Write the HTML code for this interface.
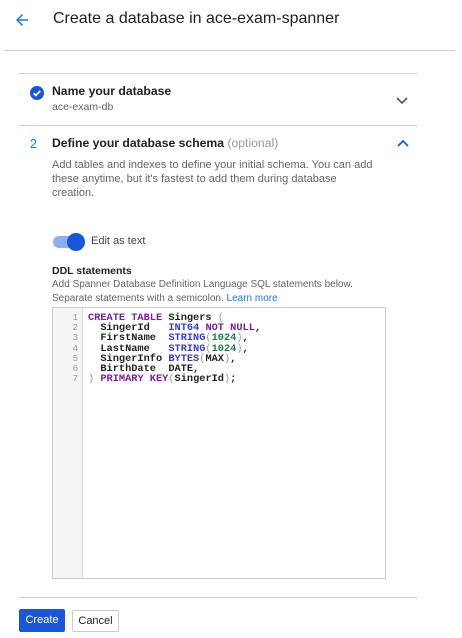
<!DOCTYPE html>
<html><head><meta charset="utf-8"><style>
*{margin:0;padding:0;box-sizing:border-box}
body{width:462px;height:638px;background:#fff;font-family:"Liberation Sans",Arial,sans-serif;color:#202124;position:relative;overflow:hidden}
.a{position:absolute;white-space:nowrap}
.hr{position:absolute;height:1px;background:#d0d0d0}
.code{position:absolute;left:52px;top:307px;width:334px;height:272px;border:1px solid #ccc;background:#fff}
.gut{position:absolute;left:0;top:0;width:30px;height:100%;background:#f5f5f5;border-right:1px solid #ddd;font:9px/10.2px "Liberation Mono",monospace;color:#999;text-align:right;padding:5px 4px 0 0}
.src{position:absolute;left:35px;top:5px;font:10.3px/10.2px "Liberation Mono",monospace;color:#222;white-space:pre;font-weight:bold}
.k{color:#7a1f9c}.t{color:#3a3acb}.n{color:#1c7a4a}.p{color:#999;font-weight:normal}
</style></head><body>
<svg class="a" style="left:13px;top:11px" width="18" height="18" viewBox="0 0 24 24"><path d="M20 11H7.8l5.6-5.6L12 4l-8 8 8 8 1.4-1.4L7.8 13H20z" fill="#1a73e8"/></svg>
<div class="a" style="left:53px;top:10px;font-size:16px;color:#202124">Create a database in ace-exam-spanner</div>
<div class="hr" style="left:4px;width:451px;top:50px"></div>
<div class="hr" style="left:19px;width:398px;top:73px"></div>
<svg class="a" style="left:29px;top:85px" width="16" height="16" viewBox="0 0 16 16"><circle cx="8" cy="8" r="7" fill="#1a56d6"/><path d="M4.6 8.2l2.2 2.2 4.4-4.4" stroke="#fff" stroke-width="1.8" fill="none"/></svg>
<div class="a" style="left:52px;top:84px;font-size:12.2px;font-weight:bold;color:#222">Name your database</div>
<div class="a" style="left:52px;top:101px;font-size:10.5px;color:#5f6368">ace-exam-db</div>
<svg class="a" style="left:396px;top:96px" width="12" height="9" viewBox="0 0 12 9"><path d="M1 2l5 5 5-5" stroke="#555" stroke-width="1.6" fill="none"/></svg>
<div class="hr" style="left:19px;width:398px;top:125px"></div>
<div class="a" style="left:30px;top:137px;font-size:12.5px;color:#1a73e8">2</div>
<div class="a" style="left:52px;top:136px;font-size:12.2px;font-weight:bold;color:#222">Define your database schema <span style="font-weight:normal;color:#999">(optional)</span></div>
<svg class="a" style="left:397px;top:139px" width="12" height="9" viewBox="0 0 12 9"><path d="M1 7l5-5 5 5" stroke="#1a56d6" stroke-width="1.8" fill="none"/></svg>
<div class="a" style="left:52px;top:158px;font-size:11px;line-height:14px;color:#666;white-space:normal;width:328px">Add tables and indexes to define your initial schema. You can add these anytime, but it's fastest to add them during database creation.</div>
<div class="a" style="left:53px;top:236px;width:28px;height:12px;border-radius:6px;background:#8ab0f0"></div>
<div class="a" style="left:67px;top:233px;width:18px;height:18px;border-radius:50%;background:#1a56d6"></div>
<div class="a" style="left:91px;top:235px;font-size:11px;color:#444">Edit as text</div>
<div class="a" style="left:52px;top:265px;font-size:10.5px;font-weight:bold;color:#222">DDL statements</div>
<div class="a" style="left:52px;top:278px;font-size:10px;line-height:14px;color:#666">Add Spanner Database Definition Language SQL statements below.<br>Separate statements with a semicolon. <span style="color:#1a73e8">Learn more</span></div>
<div class="code"><div class="gut">1<br>2<br>3<br>4<br>5<br>6<br>7</div>
<div class="src"><span class="k">CREATE TABLE</span> Singers <span class="p">(</span>
  SingerId   <span class="t">INT64</span> <span class="k">NOT NULL</span>,
  FirstName  <span class="t">STRING</span><span class="p">(</span><span class="n">1024</span><span class="p">)</span>,
  LastName   <span class="t">STRING</span><span class="p">(</span><span class="n">1024</span><span class="p">)</span>,
  SingerInfo <span class="t">BYTES</span><span class="p">(</span>MAX<span class="p">)</span>,
  BirthDate  DATE,
<span class="p">)</span> <span class="k">PRIMARY KEY</span><span class="p">(</span>SingerId<span class="p">)</span>;</div></div>
<div class="hr" style="left:19px;width:398px;top:597px"></div>
<div class="a" style="left:19px;top:609px;width:46px;height:23px;background:#1a56d6;border-radius:2px;color:#fff;font-size:11px;line-height:23px;text-align:center">Create</div>
<div class="a" style="left:72px;top:610px;width:47px;height:22px;border:1px solid #ccc;border-radius:2px;color:#222;font-size:11px;line-height:20px;text-align:center">Cancel</div>
</body></html>
